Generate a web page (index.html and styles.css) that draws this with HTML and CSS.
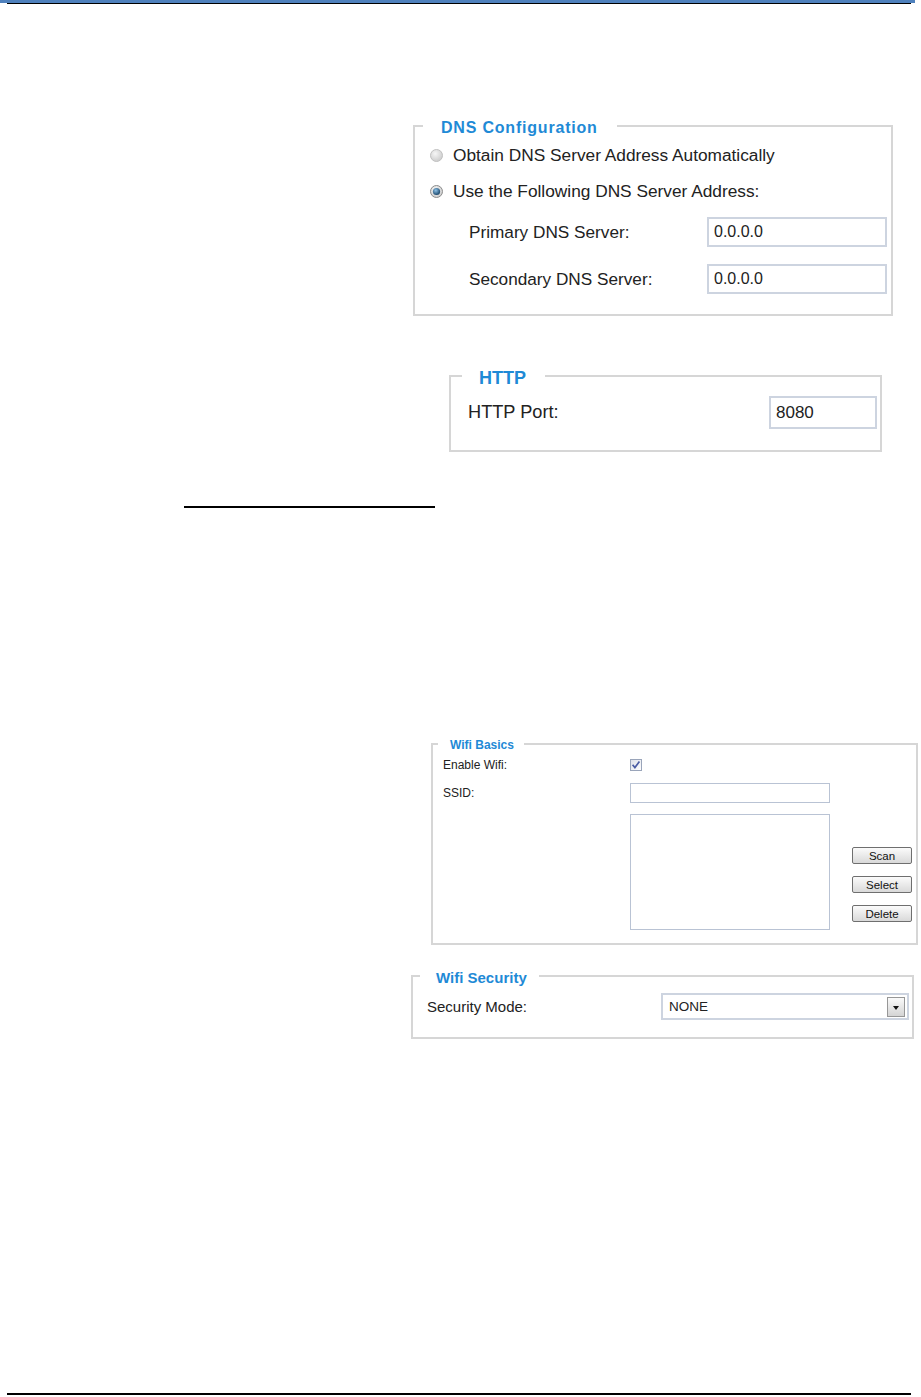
FILE: index.html
```html
<!DOCTYPE html>
<html lang="en">
<head>
  <meta charset="UTF-8" />
  <meta name="viewport" content="width=device-width, initial-scale=1.0" />
  <title>Network Settings</title>
  <link rel="stylesheet" href="styles.css">
</head>
<body>
  <!-- Page header rule -->
  <div class="page-band"></div>
  <div class="page-rule"></div>

  <!-- DNS Configuration -->
  <fieldset class="panel dns-panel">
    <legend>DNS Configuration</legend>
    <div class="radio-row">
      <svg class="radio" width="13" height="13" viewBox="0 0 13 13">
        <defs>
          <radialGradient id="radOff" cx="40%" cy="35%" r="70%">
            <stop offset="0" stop-color="#f6f6f6"/>
            <stop offset="1" stop-color="#cacaca"/>
          </radialGradient>
        </defs>
        <circle cx="6.5" cy="6.5" r="6" fill="url(#radOff)" stroke="#c0c0c0"/>
      </svg>
      <span>Obtain DNS Server Address Automatically</span>
    </div>
    <div class="radio-row">
      <svg class="radio" width="13" height="13" viewBox="0 0 13 13">
        <defs>
          <radialGradient id="radDot" cx="40%" cy="35%" r="70%">
            <stop offset="0" stop-color="#8cc0e6"/>
            <stop offset="1" stop-color="#123e62"/>
          </radialGradient>
        </defs>
        <circle cx="6.5" cy="6.5" r="6" fill="url(#radOff)" stroke="#8c8c8c"/>
        <circle cx="6.5" cy="6.5" r="3.6" fill="url(#radDot)"/>
      </svg>
      <span>Use the Following DNS Server Address:</span>
    </div>
    <div class="field-row first">
      <span class="field-label">Primary DNS Server:</span>
      <div class="text-box">0.0.0.0</div>
    </div>
    <div class="field-row second">
      <span class="field-label">Secondary DNS Server:</span>
      <div class="text-box">0.0.0.0</div>
    </div>
  </fieldset>

  <!-- HTTP -->
  <fieldset class="panel http-panel">
    <legend>HTTP</legend>
    <div class="http-row">
      <span class="http-label">HTTP Port:</span>
      <div class="text-box port-box">8080</div>
    </div>
  </fieldset>

  <div class="link-rule"></div>

  <!-- Wifi Basics -->
  <fieldset class="panel wifi-panel">
    <legend>Wifi Basics</legend>
    <div class="wifi-row enable-row">
      <span class="wifi-label">Enable Wifi:</span>
      <svg class="check" width="12" height="12" viewBox="0 0 12 12">
        <defs>
          <linearGradient id="chkBg" x1="0" y1="0" x2="1" y2="1">
            <stop offset="0" stop-color="#dcdfe8"/>
            <stop offset="1" stop-color="#ffffff"/>
          </linearGradient>
        </defs>
        <rect x="0.5" y="0.5" width="11" height="11" fill="url(#chkBg)" stroke="#9aa5ba"/>
        <polyline points="2.6,5.8 4.9,8.6 9.4,2.6" fill="none" stroke="#4a5ca4" stroke-width="1.7"/>
      </svg>
    </div>
    <div class="wifi-row ssid-row">
      <span class="wifi-label">SSID:</span>
      <div class="ssid-box"></div>
    </div>
    <div class="wifi-row list-row">
      <span class="wifi-label"></span>
      <div class="list-box"></div>
      <div class="btn-col">
        <button class="gray-btn">Scan</button>
        <button class="gray-btn">Select</button>
        <button class="gray-btn">Delete</button>
      </div>
    </div>
  </fieldset>

  <!-- Wifi Security -->
  <fieldset class="panel security-panel">
    <legend>Wifi Security</legend>
    <div class="sec-row">
      <span class="sec-label">Security Mode:</span>
      <div class="select-box">
        <span class="select-text">NONE</span>
        <span class="select-arrow"></span>
      </div>
    </div>
  </fieldset>

  <div class="page-foot"></div>
</body>
</html>
```

FILE: styles.css
```css
/* Base */
* { box-sizing: border-box; }
body {
  margin: 0;
  font-family: 'Liberation Sans', Arial, sans-serif;
  color: #222;
  background: #fff;
  width: 921px;
  height: 1397px;
  overflow: hidden;
}

/* Page header / footer rules */
.page-band {
  width: 915px;
  height: 3px;
  background: #4f81bd;
}
.page-rule {
  margin-left: 7px;
  width: 904px;
  height: 1px;
  background: #000;
}
.page-foot {
  margin-top: 354px;
  margin-left: 7px;
  width: 904px;
  height: 2px;
  background: #000;
}
.link-rule {
  margin-top: 54px;
  margin-left: 184px;
  width: 251px;
  height: 2px;
  background: #000;
}

/* Panels (fieldsets) */
.panel {
  margin: 0;
  padding: 0;
  min-inline-size: 0;
  border: 2px solid #d6d6d6;
}
.panel legend {
  font-weight: bold;
  color: #1f8ad6;
  padding-top: 4px;
}

/* DNS */
.dns-panel {
  margin-top: 111px;
  margin-left: 413px;
  width: 480px;
  padding-bottom: 20px;
}
.dns-panel legend {
  font-size: 16px;
  line-height: 18px;
  letter-spacing: 0.8px;
  margin-left: 8px;
  padding: 4px 19px 0 18px;
}
.radio-row {
  display: flex;
  align-items: center;
  gap: 10px;
  height: 36px;
  padding-left: 15px;
  font-size: 17.3px;
}
.radio { flex: none; }
.field-row {
  display: flex;
  align-items: center;
  padding-left: 54px;
  font-size: 17.2px;
}
.field-row.first { margin-top: 8px; }
.field-row.second { margin-top: 17px; }
.field-label { width: 238px; }
.text-box {
  width: 180px;
  height: 30px;
  border: 2px solid #cdd4e0;
  padding-left: 5px;
  font-size: 16px;
  display: flex;
  align-items: center;
}

/* HTTP */
.http-panel {
  margin-top: 48px;
  margin-left: 449px;
  width: 433px;
  padding-bottom: 21px;
}
.http-panel legend {
  font-size: 18px;
  line-height: 20px;
  margin-left: 11px;
  padding: 4px 19px 0 17px;
}
.http-row {
  display: flex;
  align-items: center;
  margin-top: 8px;
  padding-left: 17px;
}
.http-label { flex: 1; font-size: 18.2px; }
.port-box {
  width: 108px;
  height: 33px;
  margin-right: 3px;
  font-size: 17px;
}

/* Wifi basics */
.wifi-panel {
  margin-top: 228px;
  margin-left: 431px;
  width: 487px;
  padding-bottom: 13px;
  font-size: 12px;
}
.wifi-panel legend {
  font-size: 12px;
  line-height: 13px;
  margin-left: 5px;
  padding: 3px 10px 0 12px;
}
.wifi-row {
  display: flex;
  align-items: center;
  padding-left: 10px;
}
.wifi-label { width: 187px; flex: none; }
.enable-row { height: 26px; }
.ssid-row { margin-top: 5px; height: 20px; }
.ssid-box {
  width: 200px;
  height: 20px;
  border: 1px solid #b9c3d4;
}
.list-row { margin-top: 11px; align-items: flex-start; }
.list-box {
  width: 200px;
  height: 116px;
  border: 1px solid #b9c3d4;
}
.btn-col {
  display: flex;
  flex-direction: column;
  gap: 12px;
  margin-left: 22px;
  padding-top: 33px;
}
.gray-btn {
  width: 60px;
  height: 17px;
  padding: 0;
  border: 1px solid #6f6f6f;
  border-radius: 2px;
  background: linear-gradient(#fbfbfb, #d9d9d9);
  font-family: 'Liberation Sans', Arial, sans-serif;
  font-size: 11.5px;
  color: #111;
}

/* Wifi security */
.security-panel {
  margin-top: 21px;
  margin-left: 411px;
  width: 503px;
  padding-bottom: 17px;
}
.security-panel legend {
  font-size: 15px;
  line-height: 17px;
  margin-left: 7px;
  padding: 3px 12px 0 16px;
}
.sec-row {
  display: flex;
  align-items: center;
  margin-top: 7px;
  padding-left: 14px;
}
.sec-label { flex: 1; font-size: 15px; }
.select-box {
  display: flex;
  align-items: center;
  width: 248px;
  height: 27px;
  margin-right: 3px;
  border: 2px solid #cdd4e0;
}
.select-text {
  flex: 1;
  padding-left: 6px;
  font-size: 13.5px;
}
.select-arrow {
  position: relative;
  width: 18px;
  height: 20px;
  margin-right: 2px;
  border: 1px solid #979797;
  background: linear-gradient(#fafafa, #d4d4d4);
}
.select-arrow::after {
  content: "";
  position: absolute;
  left: 5px;
  top: 8px;
  border-left: 3.5px solid transparent;
  border-right: 3.5px solid transparent;
  border-top: 4px solid #111;
}
```
